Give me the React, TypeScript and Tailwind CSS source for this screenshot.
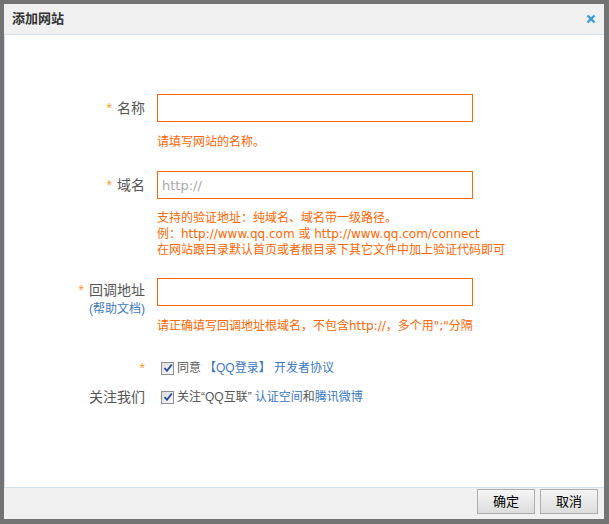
import React from "react";

const FONT = "font-['Liberation_Sans','Noto_Sans_CJK_SC',sans-serif]";
const HINT = "font-['DejaVu_Sans','Noto_Sans_CJK_SC',sans-serif] leading-[16px] text-[#ff6600] whitespace-nowrap";

function Star() {
  return <span className="mr-[5px] text-[14px] text-[#ff9a1f]">*</span>;
}

function Check() {
  return (
    <span className="flex h-[13px] w-[13px] shrink-0 items-center justify-center border border-[#8e8f8f] bg-gradient-to-br from-[#dcdcdc] to-[#fafafa]">
      <svg width="10" height="10" viewBox="0 0 10 10">
        <path d="M1.5 5 L4 7.8 L8.8 1.5" fill="none" stroke="#2a4aa0" strokeWidth="1.8" />
      </svg>
    </span>
  );
}

export default function App() {
  return (
    <div className={`flex h-[524px] w-[609px] flex-col bg-[#737373] pb-[5px] pl-[4px] pr-[5px] pt-[4px] ${FONT}`}>
      {/* title bar */}
      <div className="flex h-[31px] shrink-0 items-center justify-between border-b border-[#cfe0ee] bg-[#f0f0f0] pl-[8px] pr-[8px]">
        <span className="text-[13px] font-bold text-[#333]">添加网站</span>
        <svg width="10" height="10" viewBox="0 0 10 10">
          <path d="M1.5 1.5 L8.5 8.5 M8.5 1.5 L1.5 8.5" stroke="#3a9ad9" strokeWidth="2.4" />
        </svg>
      </div>

      {/* body */}
      <div className="flex h-[453px] shrink-0 flex-col border-b border-l border-[#cfe0ee] bg-white pt-[59px] text-[12px]">
        <div className="grid grid-cols-[140px_316px] items-center gap-x-[12px]">
          <div className="text-right text-[14px] text-[#555]">
            <Star />
            名称
          </div>
          <input className="h-[28px] border border-[#ff6a00] px-[4px] text-[13px] outline-none" />
          <div />
          <p className={`mt-[12px] ${HINT}`}>请填写网站的名称。</p>
        </div>

        <div className="mt-[21px] grid grid-cols-[140px_316px] items-center gap-x-[12px]">
          <div className="text-right text-[14px] text-[#555]">
            <Star />
            域名
          </div>
          <input
            placeholder="http://"
            className="h-[28px] border border-[#ff6a00] px-[4px] font-['DejaVu_Sans',sans-serif] text-[13px] outline-none placeholder:text-[#a9a9a9]"
          />
          <div />
          <div className={`mt-[11px] ${HINT}`}>
            <p>支持的验证地址：纯域名、域名带一级路径。</p>
            <p>例：http://www.qq.com 或 http://www.qq.com/connect</p>
            <p>在网站跟目录默认首页或者根目录下其它文件中加上验证代码即可</p>
          </div>
        </div>

        <div className="mt-[20px] grid grid-cols-[140px_316px] items-start gap-x-[12px]">
          <div className="pt-[2px] text-right">
            <p className="text-[14px] leading-[20px] text-[#555]">
              <Star />
              回调地址
            </p>
            <p className="leading-[18px] text-[#3a78c3]">(帮助文档)</p>
          </div>
          <div>
            <input className="h-[28px] w-full border border-[#ff6a00] px-[4px] text-[13px] outline-none" />
            <p className={`mt-[12px] ${HINT}`}>
              请正确填写回调地址根域名，不包含http://，多个用";"分隔
            </p>
          </div>
        </div>

        <div className="mt-[24px] grid grid-cols-[140px_316px] items-center gap-x-[12px] leading-[20px]">
          <div className="text-right text-[14px] text-[#ff9a1f]">*</div>
          <div className="flex items-center pl-[4px] text-[#555]">
            <Check />
            <span className="ml-[3px]">同意</span>
            <span className="ml-[3px] text-[#3a78c3]">【QQ登录】 开发者协议</span>
          </div>
        </div>

        <div className="mt-[9px] grid grid-cols-[140px_316px] items-center gap-x-[12px] leading-[20px]">
          <div className="text-right text-[14px] text-[#555]">关注我们</div>
          <div className="flex items-center pl-[4px] text-[#555]">
            <Check />
            <span className="ml-[3px]">关注“QQ互联” </span>
            <span className="ml-[3px] text-[#3a78c3]">认证空间</span>
            <span>和</span>
            <span className="text-[#3a78c3]">腾讯微博</span>
          </div>
        </div>
      </div>

      {/* footer */}
      <div className="flex flex-1 items-start justify-end gap-[5px] bg-[#f0f0f0] pr-[6px] pt-[1px]">
        <button className="h-[25px] w-[58px] border border-[#acacac] bg-gradient-to-b from-[#f6f6f6] to-[#dcdcdc] text-[13px] text-black">
          确定
        </button>
        <button className="h-[25px] w-[58px] border border-[#acacac] bg-gradient-to-b from-[#f6f6f6] to-[#dcdcdc] text-[13px] text-black">
          取消
        </button>
      </div>
    </div>
  );
}
